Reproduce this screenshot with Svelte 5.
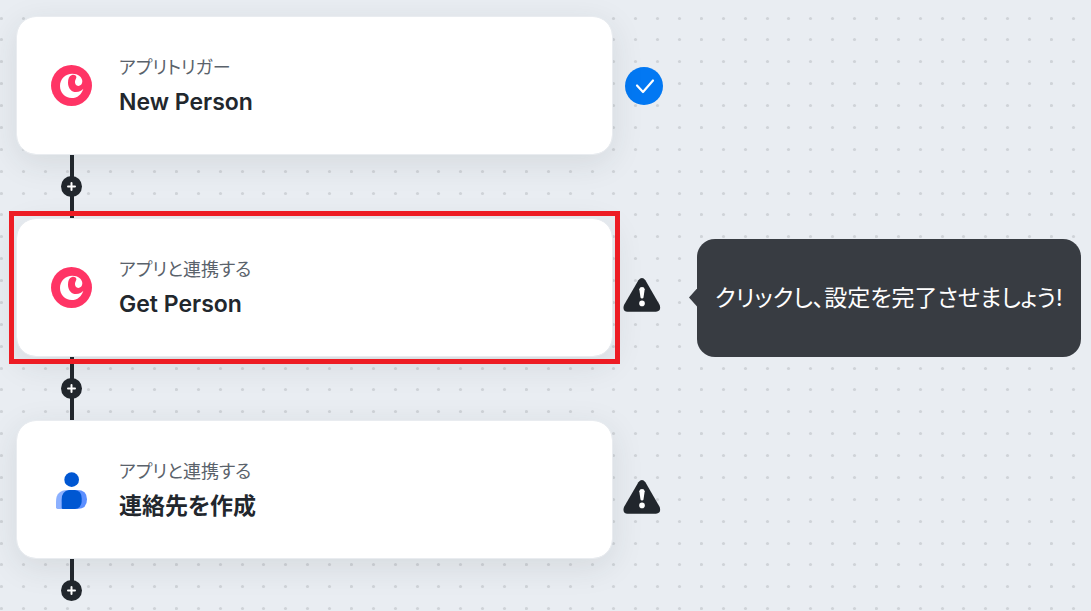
<script>
  const steps = [
    { kind: 'アプリトリガー', title: 'New Person', icon: 'copper', state: 'done' },
    {
      kind: 'アプリと連携する',
      title: 'Get Person',
      icon: 'copper',
      state: 'warning',
      selected: true,
      hint: 'クリックし、設定を完了させましょう!'
    },
    { kind: 'アプリと連携する', title: '連絡先を作成', icon: 'contact', state: 'warning' }
  ];

  // The dot grid repeats every 175px, with eight dots to a side.
  const dotX = [1, 23, 45, 67, 88, 110, 132, 154];
  const dotY = [18, 39, 61, 83, 105, 127, 149, 171];
</script>

<main class="canvas">
  <svg class="dots" aria-hidden="true">
    <defs>
      <pattern id="dot-grid" width="175" height="175" patternUnits="userSpaceOnUse">
        {#each dotY as y}
          {#each dotX as x}
            <circle cx={x + 0.5} cy={y + 0.5} r="1.6" fill="#cfd3d8" />
          {/each}
        {/each}
      </pattern>
    </defs>
    <rect width="100%" height="100%" fill="url(#dot-grid)" />
  </svg>

  <ol class="flow">
    {#each steps as step, i}
      <li class="step">
        <div class="row">
          <div class="slot" class:selected={step.selected}>
            <button class="card" type="button">
              {#if step.icon === 'copper'}
                <svg class="app-icon" viewBox="0 0 123 123" aria-hidden="true">
                  <circle cx="61.5" cy="61.5" r="61.5" fill="#ff3465" />
                  <path
                    fill="#fff"
                    d="M97 71C92 88 79 99 62 99C42 99 27 83 27 63C27 42 43 26 64 26C81 26 94 36 94 49C94 58 88 63 82 63C75 63 71 57 72 49C73 42 77 40 76 35C74 30 68 28 63 30C54 33 51 41 51 53C51 70 62 81 75 81C86 81 92 76 97 71Z"
                  />
                </svg>
              {:else}
                <svg class="app-icon" viewBox="0 0 123 123" aria-hidden="true">
                  <circle cx="62" cy="32" r="22" fill="#0057d2" />
                  <path fill="#8bb0ff" d="M50 63H62V120H20Q15 120 15 115V98Q15 63 50 63Z" />
                  <path fill="#5c8fff" d="M60 63H78Q108 63 108 91Q108 120 80 120H60Z" />
                  <path fill="#0057d2" d="M54 63H72Q92 66 92 88V98Q91 116 72 120H36Q32 120 32 116V92Q32 66 54 63Z" />
                </svg>
              {/if}
              <span class="text">
                <span class="kind">{step.kind}</span>
                <span class="title">{step.title}</span>
              </span>
            </button>
          </div>

          <div class="side">
            {#if step.state === 'done'}
              <svg class="status" viewBox="0 0 38 38" role="img" aria-label="完了">
                <circle cx="19" cy="19" r="19" fill="#0278f3" />
                <path d="M12 18.5L18 25L28 13.5" fill="none" stroke="#fff" stroke-width="2.2" stroke-linecap="round" stroke-linejoin="round" />
              </svg>
            {:else}
              <svg class="status warning" viewBox="0 0 38 38" role="img" aria-label="未完了">
                <path
                  fill="#22272d"
                  d="M15.4 4.2Q19 -0.2 22.4 4.2L36.7 29Q38.5 35.5 33 35.7H4.6Q-1 35.5 1 29Z"
                />
                <path d="M16.3 13.2Q16.5 11 19 11T21.700 13.200L20.500 21.400Q20.300 22.500 19 22.500T17.500 21.400Z" fill="#fff" />
                <circle cx="19" cy="27.4" r="2.8" fill="#fff" />
              </svg>
            {/if}
            {#if step.hint}
              <p class="hint">{step.hint}</p>
            {/if}
          </div>
        </div>

        <div class="connector" class:last={i === steps.length - 1}>
          <button class="add" type="button" aria-label="追加">
            <svg viewBox="0 0 21 21" aria-hidden="true">
              <path d="M10.5 7V14M7 10.5H14" stroke="#fff" stroke-width="2" stroke-linecap="round" />
            </svg>
          </button>
        </div>
      </li>
    {/each}
  </ol>
</main>

<style>
  :global(body) {
    margin: 0;
    background: #e9edf2;
  }

  .canvas {
    position: relative;
    box-sizing: border-box;
    min-height: 100vh;
    padding: 16px 10px 0 16px;
    overflow: hidden;
    font-family: Inter, 'Noto Sans CJK JP', sans-serif;
    color: #22272d;
  }

  .dots {
    position: absolute;
    inset: 0;
    width: 100%;
    height: 100%;
  }

  .flow {
    position: relative;
    margin: 0;
    padding: 0;
    list-style: none;
  }

  .row {
    display: grid;
    grid-template-columns: minmax(0, 597px) minmax(38px, 1fr);
    column-gap: 12px;
  }

  .slot {
    position: relative;
    z-index: 1;
  }

  .selected::after {
    content: '';
    position: absolute;
    z-index: 3;
    inset: -7px;
    border: 5px solid #ed1c24;
    pointer-events: none;
  }

  .card {
    display: flex;
    align-items: center;
    gap: 27px;
    box-sizing: border-box;
    width: 100%;
    min-height: 139px;
    padding: 0 34px;
    border: 1px solid #e9ecf0;
    border-radius: 20px;
    background: #fff;
    background-clip: padding-box;
    box-shadow: 0 8px 32px rgba(35, 45, 50, 0.1);
    font: inherit;
    color: inherit;
    text-align: left;
    cursor: pointer;
  }

  .app-icon {
    flex: none;
    width: 41px;
    height: 41px;
  }

  .text {
    display: flex;
    flex-direction: column;
    padding-bottom: 2px;
    line-height: 35px;
    font-feature-settings: 'palt';
  }

  .kind {
    font-size: 18px;
    color: #5a626b;
  }

  .title {
    font-size: 23px;
    font-weight: 600;
  }

  .side {
    display: flex;
    align-items: center;
    gap: 36px;
  }

  .status {
    flex: none;
    width: 38px;
    height: 38px;
  }

  .warning {
    margin: 15px 0 0 -2px;
  }

  .hint {
    position: relative;
    flex: 1;
    margin: 20px 0 0;
    padding: 41px 18px;
    border-radius: 18px;
    background: #383c42;
    color: #fff;
    font-size: 23px;
    line-height: 36px;
    white-space: nowrap;
    font-feature-settings: 'palt';
  }

  .hint::before {
    content: '';
    position: absolute;
    top: 50%;
    right: 100%;
    width: 8px;
    height: 18px;
    transform: translateY(-50%);
    background: inherit;
    clip-path: polygon(100% 0, 100% 100%, 0 50%);
  }

  .connector {
    display: flex;
    align-items: center;
    width: 21px;
    height: 63px;
    margin-left: 45px;
    background: linear-gradient(#22272d, #22272d) 9px 0 / 4px 100% no-repeat;
  }

  .last {
    align-items: flex-end;
    height: 42px;
    background-size: 4px 32px;
  }

  .add {
    width: 21px;
    height: 21px;
    padding: 0;
    border: 0;
    border-radius: 50%;
    background: #22272d;
    cursor: pointer;
  }

  .add svg {
    display: block;
  }
</style>
